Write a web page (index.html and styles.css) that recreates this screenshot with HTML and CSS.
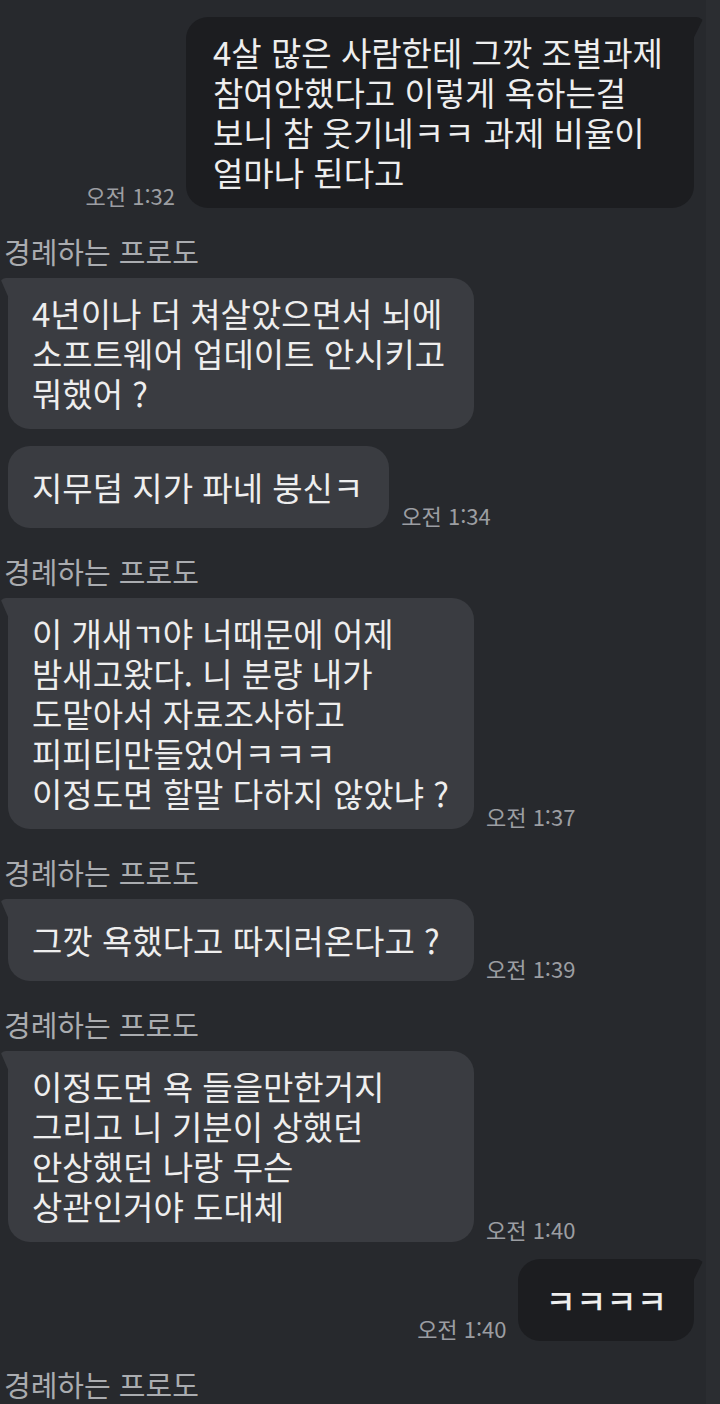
FILE: index.html
```html
<!DOCTYPE html>
<html lang="ko">
<head>
    <meta charset="UTF-8">
    <meta name="viewport" content="width=device-width, initial-scale=1.0">
    <title>채팅</title>
    <link rel="stylesheet" href="styles.css">
</head>
<body>
    <div class="chat">
        <!-- 내가 보낸 메시지 -->
        <div class="row mine">
            <span class="time">오전 1:32</span>
            <div class="bubble tail wide-out">4살 많은 사람한테 그깟 조별과제<br>참여안했다고 이렇게 욕하는걸<br>보니 참 웃기네ㅋㅋ 과제 비율이<br>얼마나 된다고</div>
        </div>

        <div class="name">경례하는 프로도</div>
        <div class="row theirs">
            <div class="bubble tail full">4년이나 더 쳐살았으면서 뇌에<br>소프트웨어 업데이트 안시키고<br>뭐했어 ?</div>
        </div>
        <div class="row theirs next">
            <div class="bubble single">지무덤 지가 파네 붕신ㅋ</div>
            <span class="time">오전 1:34</span>
        </div>

        <div class="name">경례하는 프로도</div>
        <div class="row theirs">
            <div class="bubble tail full">이 개새ㄲ야 너때문에 어제<br>밤새고왔다. 니 분량 내가<br>도맡아서 자료조사하고<br>피피티만들었어ㅋㅋㅋ<br>이정도면 할말 다하지 않았냐 ?</div>
            <span class="time">오전 1:37</span>
        </div>

        <div class="name">경례하는 프로도</div>
        <div class="row theirs">
            <div class="bubble tail single full">그깟 욕했다고 따지러온다고 ?</div>
            <span class="time">오전 1:39</span>
        </div>

        <div class="name">경례하는 프로도</div>
        <div class="row theirs">
            <div class="bubble tail full">이정도면 욕 들을만한거지<br>그리고 니 기분이 상했던<br>안상했던 나랑 무슨<br>상관인거야 도대체</div>
            <span class="time">오전 1:40</span>
        </div>

        <div class="row mine next">
            <span class="time">오전 1:40</span>
            <div class="bubble tail single laugh">ㅋㅋㅋㅋ</div>
        </div>

        <div class="name">경례하는 프로도</div>
    </div>
</body>
</html>
```

FILE: styles.css
```css
/* 다크 모드 채팅 화면 */
body {
    margin: 0;
    background: linear-gradient(to right, #27292d 706px, #2b2d31 706px);
    color: #eeeeee;
    font-family: "Noto Sans CJK KR", "Noto Sans", sans-serif;
    height: 1404px;
    overflow: hidden;
}

.chat {
    padding-top: 17px;
}

/* 한 줄 (말풍선 + 시간) */
.row {
    display: flex;
    align-items: flex-end;
    gap: 12px;
}
.row.theirs {
    padding-left: 8px;
}
.row.mine {
    justify-content: flex-end;
    padding-right: 26px;
    gap: 11px;
}
.row.next {
    margin-top: 17px;
}

/* 말풍선 */
.bubble {
    position: relative;
    box-sizing: border-box;
    padding: 15px 26px 16px 24px;
    font-size: 33px;
    line-height: 40px;
    border-radius: 22px;
    background-color: #3a3c41;
    white-space: nowrap;
}
.mine .bubble {
    background-color: #1c1d20;
    padding-left: 27px;
    padding-right: 27px;
}
.bubble.single {
    min-height: 82px;
    display: flex;
    align-items: center;
}
.bubble.full {
    width: 466px;
}
.bubble.wide-out {
    width: 508px;
}
.bubble.laugh {
    font-weight: 500;
    padding-left: 28px;
}

/* 꼬리 */
.theirs .bubble.tail {
    border-top-left-radius: 6px;
}
.theirs .bubble.tail::before {
    content: "";
    position: absolute;
    left: -8px;
    top: 0;
    width: 16px;
    height: 22px;
    background-color: inherit;
    border-top-left-radius: 6px;
    clip-path: polygon(0 0, 100% 0, 100% 100%, 60% 100%);
}
.mine .bubble.tail {
    border-top-right-radius: 6px;
}
.mine .bubble.tail::before {
    content: "";
    position: absolute;
    right: -10px;
    top: 0;
    width: 18px;
    height: 22px;
    background-color: inherit;
    border-top-right-radius: 8px;
    clip-path: polygon(0 0, 100% 0, 40% 100%, 0 100%);
}

/* 시간 */
.time {
    font-size: 22px;
    line-height: 24px;
    color: #9c9ea2;
    white-space: nowrap;
    padding-bottom: 1px;
}

/* 이름 */
.name {
    margin-top: 26px;
    margin-bottom: 10px;
    padding-left: 4px;
    font-size: 29px;
    line-height: 34px;
    color: #aaacb0;
}
```
